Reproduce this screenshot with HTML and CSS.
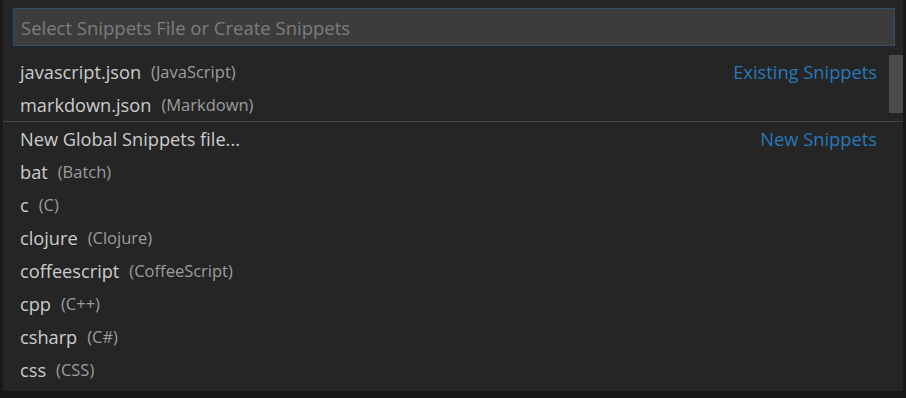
FILE: index.html
```html
<!DOCTYPE html>
<html lang="en">
<head>
    <meta charset="UTF-8">
    <title>Select Snippets</title>
    <link rel="stylesheet" href="styles.css">
</head>
<body>
    <div class="quick-open">
        <div class="input-box">
            <input type="text" class="filter" placeholder="Select Snippets File or Create Snippets">
        </div>

        <div class="list">
            <div class="group">
                <div class="row">
                    <span class="label">javascript.json</span>
                    <span class="desc">(JavaScript)</span>
                    <span class="group-label">Existing Snippets</span>
                </div>
                <div class="row">
                    <span class="label">markdown.json</span>
                    <span class="desc">(Markdown)</span>
                </div>
            </div>

            <div class="group separated">
                <div class="row">
                    <span class="label">New Global Snippets file...</span>
                    <span class="group-label">New Snippets</span>
                </div>
                <div class="row"><span class="label">bat</span><span class="desc">(Batch)</span></div>
                <div class="row"><span class="label">c</span><span class="desc">(C)</span></div>
                <div class="row"><span class="label">clojure</span><span class="desc">(Clojure)</span></div>
                <div class="row"><span class="label">coffeescript</span><span class="desc">(CoffeeScript)</span></div>
                <div class="row"><span class="label">cpp</span><span class="desc">(C++)</span></div>
                <div class="row"><span class="label">csharp</span><span class="desc">(C#)</span></div>
                <div class="row"><span class="label">css</span><span class="desc">(CSS)</span></div>
            </div>

            <div class="scrollbar"></div>
        </div>
    </div>
</body>
</html>
```

FILE: styles.css
```css
* {
    margin: 0;
    padding: 0;
    box-sizing: border-box;
}

body {
    background: #181818;
    font-family: 'Open Sans', 'Noto Sans', sans-serif;
    color: #cccccc;
    height: 398px;
    overflow: hidden;
}

.quick-open {
    margin-left: 3px;
    width: 900px;
    height: 391px;
    background: #252526;
    padding-top: 8px;
}

.input-box {
    padding: 0 8px 0 10px;
}

.filter {
    display: block;
    width: 100%;
    height: 38px;
    background: #3c3c3c;
    border: 1px solid #2d4f6b;
    color: #cccccc;
    font-family: inherit;
    font-size: 18.5px;
    padding: 0 7px;
    outline: none;
}

.filter::placeholder {
    color: #7d7d7d;
}

.list {
    position: relative;
    margin-top: 9px;
}

.separated {
    border-top: 1px solid #464646;
}

.row {
    display: flex;
    align-items: center;
    height: 33px;
    padding: 0 26px 0 17px;
    white-space: nowrap;
}

.label {
    font-size: 18.2px;
    color: #cccccc;
}

.desc {
    font-size: 16.5px;
    color: #9d9d9d;
    margin-left: 10px;
}

.group-label {
    margin-left: auto;
    font-size: 18.3px;
    color: #2878b8;
}

.scrollbar {
    position: absolute;
    top: 0;
    right: 0;
    width: 14px;
    height: 58px;
    background: #4b4b4b;
}
```
